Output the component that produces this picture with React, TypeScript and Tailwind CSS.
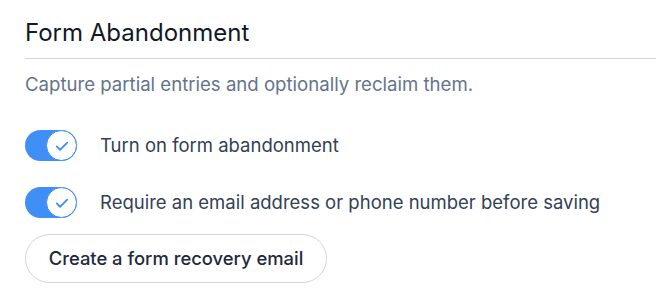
import React from "react";

function Toggle() {
  return (
    <div className="relative flex h-[31px] w-[52px] shrink-0 items-center rounded-full bg-[#3f8ff7]">
      <div className="absolute right-0 top-0 flex h-[31px] w-[31px] items-center justify-center rounded-full border border-[#3f8ff7] bg-white">
        <svg width="18" height="18" viewBox="0 0 24 24" fill="none" stroke="#3f8ff7" strokeWidth="2.4" strokeLinecap="round" strokeLinejoin="round">
          <path d="M5 12.5l4.5 4.5L19 7.5" />
        </svg>
      </div>
    </div>
  );
}

export default function App() {
  return (
    <div className="min-h-screen bg-white pl-[25px] pt-[18px]" style={{ fontFamily: "Inter, 'Noto Sans', sans-serif" }}>
      <h2 className="text-[24px] leading-[30px] text-[#111827]">Form Abandonment</h2>
      <div className="mt-[10px] h-px w-full bg-[#d1d5db]" />
      <p className="mt-[13px] text-[18.6px] leading-[24px] text-[#64748b]">Capture partial entries and optionally reclaim them.</p>
      <div className="mt-[34px] flex items-center gap-[23px]">
        <Toggle />
        <span className="text-[18.5px] text-[#334155]">Turn on form abandonment</span>
      </div>
      <div className="mt-[26px] flex items-center gap-[23px]">
        <Toggle />
        <span className="text-[18.5px] text-[#334155]">Require an email address or phone number before saving</span>
      </div>
      <button className="mt-[16px] h-[49px] w-[302px] rounded-full border border-[#d1d5db] bg-white text-[18.4px] font-medium text-[#1e293b]">
        Create a form recovery email
      </button>
    </div>
  );
}
